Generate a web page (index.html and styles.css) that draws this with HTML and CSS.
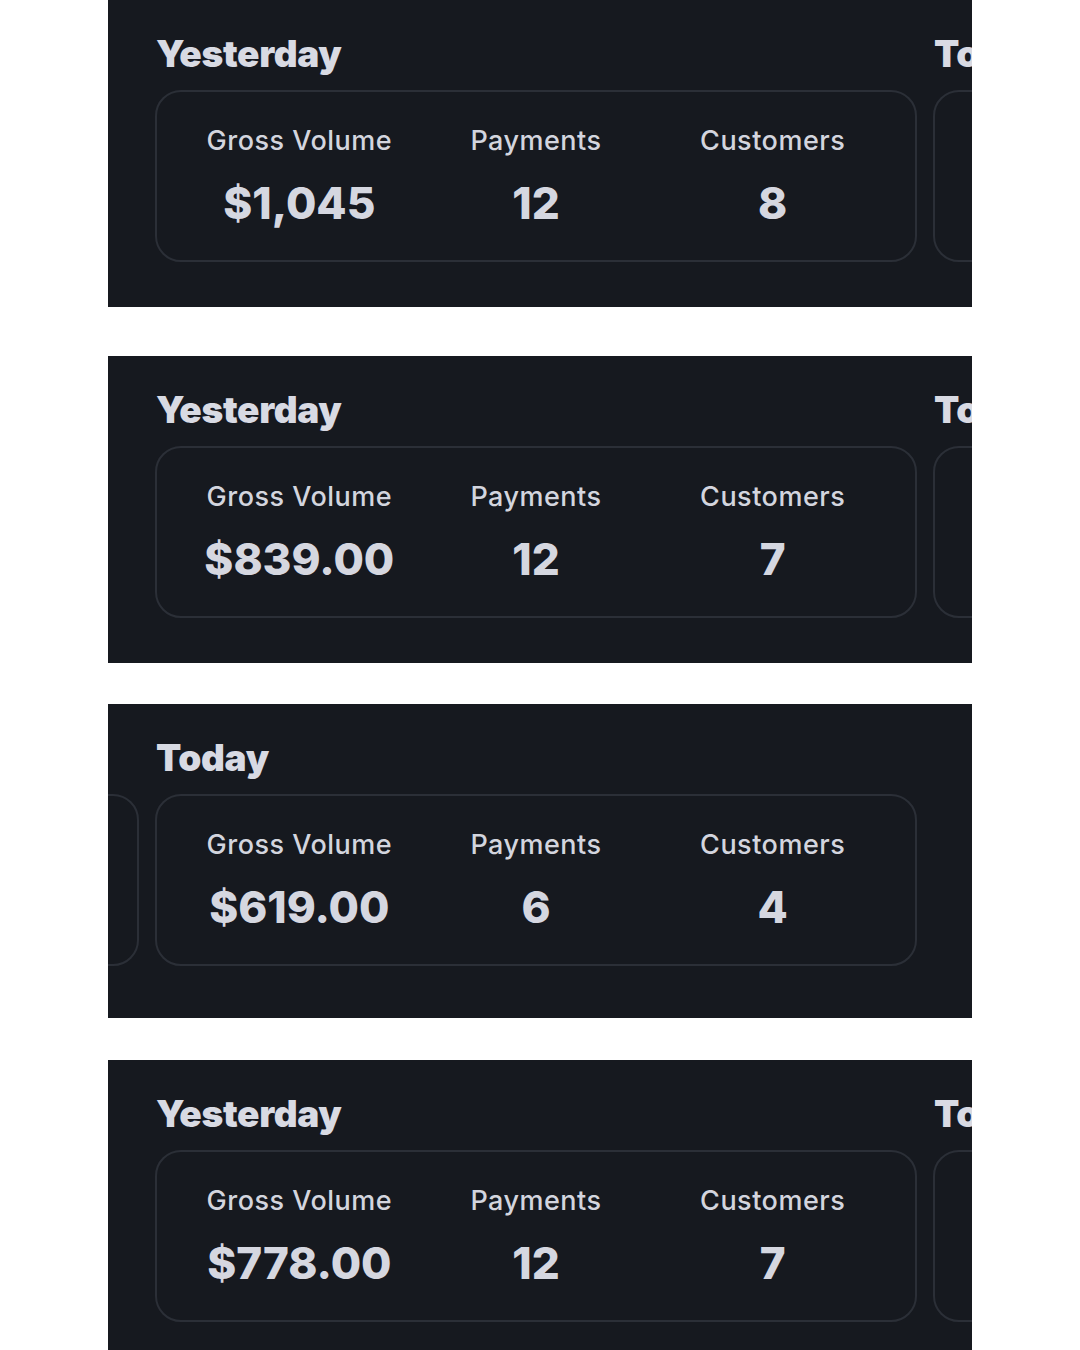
FILE: index.html
```html
<!DOCTYPE html>
<html lang="en">
<head>
<meta charset="utf-8">
<title>Summary cards</title>
<link rel="stylesheet" href="styles.css">
</head>
<body>
<main class="stack">
  <section class="panel panel-first">
    <div class="track">
      <div class="slide">
        <h2 class="title">Yesterday</h2>
        <div class="card">
          <div class="stat"><div class="label">Gross Volume</div><div class="value">$1,045</div></div>
          <div class="stat"><div class="label">Payments</div><div class="value">12</div></div>
          <div class="stat"><div class="label">Customers</div><div class="value">8</div></div>
        </div>
      </div>
      <div class="slide">
        <h2 class="title">Today</h2>
        <div class="card">
          <div class="stat"><div class="label">Gross Volume</div><div class="value">$0.00</div></div>
          <div class="stat"><div class="label">Payments</div><div class="value">0</div></div>
          <div class="stat"><div class="label">Customers</div><div class="value">0</div></div>
        </div>
      </div>
    </div>
  </section>

  <section class="panel">
    <div class="track">
      <div class="slide">
        <h2 class="title">Yesterday</h2>
        <div class="card">
          <div class="stat"><div class="label">Gross Volume</div><div class="value">$839.00</div></div>
          <div class="stat"><div class="label">Payments</div><div class="value">12</div></div>
          <div class="stat"><div class="label">Customers</div><div class="value">7</div></div>
        </div>
      </div>
      <div class="slide">
        <h2 class="title">Today</h2>
        <div class="card">
          <div class="stat"><div class="label">Gross Volume</div><div class="value">$0.00</div></div>
          <div class="stat"><div class="label">Payments</div><div class="value">0</div></div>
          <div class="stat"><div class="label">Customers</div><div class="value">0</div></div>
        </div>
      </div>
    </div>
  </section>

  <section class="panel panel-tall">
    <div class="track track-scrolled">
      <div class="slide">
        <h2 class="title">Yesterday</h2>
        <div class="card">
          <div class="stat"><div class="label">Gross Volume</div><div class="value">$0.00</div></div>
          <div class="stat"><div class="label">Payments</div><div class="value">0</div></div>
          <div class="stat"><div class="label">Customers</div><div class="value">0</div></div>
        </div>
      </div>
      <div class="slide">
        <h2 class="title">Today</h2>
        <div class="card">
          <div class="stat"><div class="label">Gross Volume</div><div class="value">$619.00</div></div>
          <div class="stat"><div class="label">Payments</div><div class="value">6</div></div>
          <div class="stat"><div class="label">Customers</div><div class="value">4</div></div>
        </div>
      </div>
    </div>
  </section>

  <section class="panel">
    <div class="track">
      <div class="slide">
        <h2 class="title">Yesterday</h2>
        <div class="card">
          <div class="stat"><div class="label">Gross Volume</div><div class="value">$778.00</div></div>
          <div class="stat"><div class="label">Payments</div><div class="value">12</div></div>
          <div class="stat"><div class="label">Customers</div><div class="value">7</div></div>
        </div>
      </div>
      <div class="slide">
        <h2 class="title">Today</h2>
        <div class="card">
          <div class="stat"><div class="label">Gross Volume</div><div class="value">$0.00</div></div>
          <div class="stat"><div class="label">Payments</div><div class="value">0</div></div>
          <div class="stat"><div class="label">Customers</div><div class="value">0</div></div>
        </div>
      </div>
    </div>
  </section>
</main>
</body>
</html>
```

FILE: styles.css
```css
html, body {
  margin: 0;
  padding: 0;
  background: #ffffff;
}

body {
  font-family: Inter, "Noto Sans", "Liberation Sans", sans-serif;
  color: #d5d7e0;
}

.stack {
  width: 864px;
  margin-left: 108px;
  display: flex;
  flex-direction: column;
}

.panel {
  background: #16191f;
  overflow: hidden;
  padding: 32px 0 45px 0;
}

.panel + .panel {
  margin-top: 49px;
}

.panel:nth-child(3) {
  margin-top: 41px;
}

.panel:nth-child(4) {
  margin-top: 42px;
}

.panel-tall {
  padding-bottom: 52px;
}

.track {
  display: flex;
  gap: 16px;
  margin-left: 47px;
}

.track-scrolled {
  margin-left: -731px;
}

.slide {
  flex: 0 0 762px;
  display: flex;
  flex-direction: column;
}

.title {
  margin: 0 0 14px 1px;
  font-size: 37px;
  line-height: 44px;
  font-weight: 900;
  color: #d8dae3;
  letter-spacing: -0.3px;
}

.card {
  box-sizing: border-box;
  height: 172px;
  border: 2px solid #2b2f37;
  border-radius: 26px;
  padding: 33px 24px 29px;
  display: grid;
  grid-template-columns: 1fr 1fr 1fr;
}

.stat {
  display: flex;
  flex-direction: column;
  align-items: center;
  gap: 20px;
}

.label {
  font-size: 27px;
  line-height: 32px;
  font-weight: 500;
  letter-spacing: 0.5px;
  color: #d3d5de;
  white-space: nowrap;
}

.value {
  font-size: 44px;
  line-height: 52px;
  font-weight: 800;
  color: #d5d7e0;
  white-space: nowrap;
}
```
